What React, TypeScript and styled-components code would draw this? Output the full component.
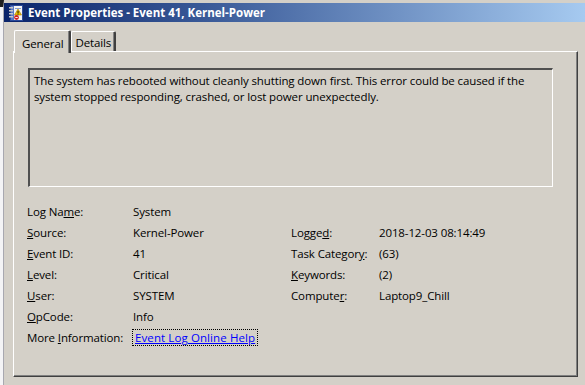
import styled, { createGlobalStyle } from "styled-components";

const GlobalStyle = createGlobalStyle`
  html, body {
    margin: 0;
    padding: 0;
    background: #d4d0c8;
    overflow: hidden;
  }
  body {
    font-family: "Open Sans", "Noto Sans", sans-serif;
    font-size: 11.5px;
    letter-spacing: -0.12px;
    color: #000;
  }
`;

type Field = { label: string; key: number; value: string };

const leftFields: Field[] = [
  { label: "Log Name:", key: 6, value: "System" },
  { label: "Source:", key: 0, value: "Kernel-Power" },
  { label: "Event ID:", key: 0, value: "41" },
  { label: "Level:", key: 0, value: "Critical" },
  { label: "User:", key: 0, value: "SYSTEM" },
  { label: "OpCode:", key: 0, value: "Info" },
];

const rightFields: (Field | null)[] = [
  null,
  { label: "Logged:", key: 5, value: "2018-12-03 08:14:49" },
  { label: "Task Category:", key: 12, value: "(63)" },
  { label: "Keywords:", key: 0, value: "(2)" },
  { label: "Computer:", key: 7, value: "Laptop9_Chill" },
  null,
];

const AccessLabel = ({ text, at }: { text: string; at: number }) => (
  <span>
    {text.slice(0, at)}
    <u>{text.charAt(at)}</u>
    {text.slice(at + 1)}
  </span>
);

const LogIcon = () => (
  <svg width="14" height="16" viewBox="0 0 14 16">
    <rect x="1.5" y="0.5" width="12" height="15" fill="#f4f4f4" stroke="#2a4a9a" />
    <rect x="2" y="1" width="3" height="14" fill="#5a7ac8" />
    {[2, 5, 8, 11].map((y) => (
      <rect key={y} x="0" y={y} width="4" height="1.5" fill="#c8c8c8" />
    ))}
    <rect x="6" y="3" width="6" height="1" fill="#8aa0d0" />
    <path d="M9 4 L12.5 10 L5.5 10 Z" fill="#f2c200" stroke="#a07800" strokeWidth="0.6" />
    <rect x="8.6" y="5.8" width="0.9" height="2.4" fill="#000" />
    <rect x="8.6" y="8.6" width="0.9" height="0.9" fill="#000" />
    <circle cx="7.5" cy="12.5" r="2.4" fill="#d02020" />
    <rect x="6.3" y="12.1" width="2.4" height="0.9" fill="#fff" />
  </svg>
);

export default function App() {
  return (
    <Root>
      <GlobalStyle />
      <BehindStrip />
      <Window>
        <TitleBar>
          <LogIcon />
          <TitleText>Event Properties - Event 41, Kernel-Power</TitleText>
        </TitleBar>
        <Body>
          <Tabs>
            <Tab $active>General</Tab>
            <Tab>Details</Tab>
          </Tabs>
          <Panel>
            <Description>
              The system has rebooted without cleanly shutting down first. This error could be
              caused if the system stopped responding, crashed, or lost power unexpectedly.
            </Description>
            <Fields>
              {leftFields.map((f, i) => {
                const r = rightFields[i];
                return (
                  <Row key={f.label}>
                    <Cell>
                      <AccessLabel text={f.label} at={f.key} />
                    </Cell>
                    <Cell>{f.value}</Cell>
                    <Cell>{r && <AccessLabel text={r.label} at={r.key} />}</Cell>
                    <Cell>{r?.value}</Cell>
                  </Row>
                );
              })}
              <Row>
                <Cell>
                  <AccessLabel text="More Information:" at={5} />
                </Cell>
                <Cell $span>
                  <HelpLink href="#">Event Log Online Help</HelpLink>
                </Cell>
              </Row>
            </Fields>
          </Panel>
        </Body>
      </Window>
    </Root>
  );
}

const Root = styled.div`
  display: flex;
  width: 585px;
  height: 385px;
`;

const BehindStrip = styled.div`
  width: 3px;
  background: #f4f4f6;
  border-right: 1px solid #a8a8b0;
  border-top: 7px solid #202020;
`;

const Window = styled.div`
  flex: 1;
  display: flex;
  flex-direction: column;
  padding-top: 3px;
  background: #d4d0c8;
`;

const TitleBar = styled.div`
  height: 19px;
  display: flex;
  align-items: center;
  gap: 5px;
  padding-left: 5px;
  background: linear-gradient(90deg, #0a246a 0%, #3a5a98 35%, #a6caf0 100%);
`;

const TitleText = styled.span`
  color: #fff;
  font-weight: bold;
  font-size: 11.5px;
  letter-spacing: 0;
  font-family: "Open Sans", "Noto Sans", sans-serif;
  white-space: nowrap;
`;

const Body = styled.div`
  flex: 1;
  display: flex;
  flex-direction: column;
  padding: 8px 7px 8px 9px;
`;

const Tabs = styled.div`
  display: flex;
  align-items: flex-end;
  padding-left: 1px;
  position: relative;
  z-index: 1;
  margin-bottom: -2px;
`;

const Tab = styled.div<{ $active?: boolean }>`
  box-sizing: border-box;
  height: ${({ $active }) => ($active ? "23px" : "20px")};
  padding: ${({ $active }) => ($active ? "2px 6px 0 7px" : "1px 3px 0 3px")};
  margin-bottom: ${({ $active }) => ($active ? "0" : "2px")};
  display: flex;
  align-items: center;
  background: #d4d0c8;
  border-top: 1px solid #fff;
  border-left: 1px solid #fff;
  border-right: 2px solid #404040;
  border-top-left-radius: 2px;
  border-top-right-radius: 2px;
  box-shadow: inset -1px 0 0 #808080;
`;

const Panel = styled.div`
  flex: 1;
  border-top: 1px solid #fff;
  border-left: 1px solid #fff;
  border-right: 1px solid #404040;
  border-bottom: 1px solid #404040;
  box-shadow: inset -1px -1px 0 #808080;
  padding: 16px 0 0 13px;
  display: flex;
  flex-direction: column;
`;

const Description = styled.div`
  box-sizing: border-box;
  width: 525px;
  height: 119px;
  margin-left: 1px;
  padding: 3px 4px;
  line-height: 16px;
  border-top: 2px solid #505050;
  border-left: 2px solid #505050;
  border-right: 1px solid #fff;
  border-bottom: 1px solid #fff;
`;

const Fields = styled.div`
  display: grid;
  grid-template-columns: 106px 158px 88px auto;
  grid-auto-rows: 21px;
  margin-top: 14px;
`;

const Row = styled.div`
  display: contents;
`;

const Cell = styled.div<{ $span?: boolean }>`
  line-height: 21px;
  white-space: nowrap;
  grid-column: ${({ $span }) => ($span ? "2 / 5" : "auto")};
`;

const HelpLink = styled.a`
  display: inline-block;
  line-height: 15px;
  color: #0000ff;
  text-decoration: underline;
  outline: 1px dotted #000;
  outline-offset: 0;
  padding: 0 2px;
  letter-spacing: 0.1px;
`;
